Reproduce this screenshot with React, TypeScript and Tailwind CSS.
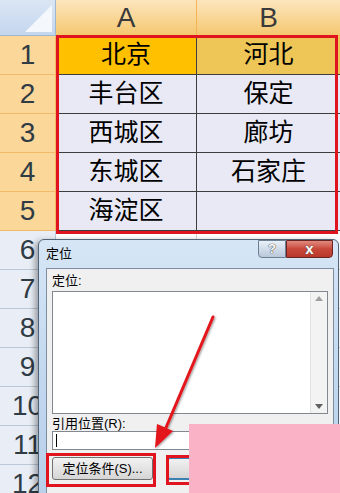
import React from "react";

const font = { fontFamily: '"Liberation Sans", "Noto Sans CJK SC", sans-serif' };

const rows: [string, string, string][] = [
  ["1", "北京", "河北"],
  ["2", "丰台区", "保定"],
  ["3", "西城区", "廊坊"],
  ["4", "东城区", "石家庄"],
  ["5", "海淀区", ""],
  ["6", "", ""],
  ["7", "", ""],
  ["8", "", ""],
  ["9", "", ""],
  ["10", "", ""],
  ["11", "", ""],
  ["12", "", ""],
];

export default function App() {
  return (
    <div className="relative w-[340px] h-[493px] overflow-hidden bg-white" style={font}>
      {/* header row */}
      <div className="flex h-[36px]">
        <div className="w-[56px] h-full bg-gradient-to-b from-[#dbe6f4] to-[#c4d6ee] border-r border-b border-[#9eb6ce] relative shrink-0">
          <svg className="absolute left-0 top-0" width="56" height="36">
            <polygon points="52,5 52,32 25,32" fill="#f4f8fd" />
          </svg>
        </div>
        <div className="w-[141px] h-full shrink-0 bg-gradient-to-b from-[#fce5bd] to-[#f5c86e] border-r border-b border-[#f2b456] flex items-center justify-center text-[28px] text-[#3a3a3a]">A</div>
        <div className="w-[143px] h-full shrink-0 bg-gradient-to-b from-[#fce5bd] to-[#f5c86e] border-b border-[#f2b456] flex items-center justify-center text-[28px] text-[#3a3a3a]">B</div>
      </div>
      {rows.map(([n, a, b], i) => {
        const sel = i < 5;
        return (
          <div key={n} className="flex h-[39px]">
            <div
              className={
                "w-[56px] shrink-0 h-full border-r border-b flex items-center justify-center text-[28px] text-[#2f3b45] " +
                (sel ? "bg-[#fbd79a] border-[#f1b968]" : "bg-[#e9eef6] border-[#b9c7d6]")
              }
            >
              {n}
            </div>
            <div
              className={
                "w-[141px] shrink-0 h-full border-r border-b border-[#3d3d3d] flex items-center justify-center text-[25px] text-black " +
                (i === 0 ? "bg-[#ffc000]" : sel ? "bg-[#e8e9f5]" : "bg-white border-[#d4d4d4]")
              }
            >
              {a}
            </div>
            <div
              className={
                "w-[143px] shrink-0 h-full border-b border-[#3d3d3d] flex items-center justify-center text-[25px] text-black " +
                (i === 0 ? "bg-[#eec557]" : sel ? "bg-[#e8e9f5]" : "bg-white border-[#d4d4d4]")
              }
            >
              {b}
            </div>
          </div>
        );
      })}

      {/* red selection frame */}
      <div className="absolute left-[56px] top-[35px] w-[282px] h-[199px] border-[3px] border-[#e0141e]" />

      {/* dialog */}
      <div className="absolute left-[38px] top-[239px] w-[301px] h-[270px] rounded-t-[6px] border border-[#4f6479] bg-gradient-to-b from-[#d6e6f6] via-[#c3d8ef] to-[#b7cfea] shadow-[-3px_2px_6px_rgba(0,0,0,0.35)]">
        <div className="h-[27px] flex items-center pl-[7px] text-[13px] text-black">定位</div>
        <div className="absolute right-[52px] top-0 w-[28px] h-[18px] rounded-bl-[4px] border border-[#6d7f94] bg-gradient-to-b from-[#e9f0f8] to-[#b9c8da] flex items-center justify-center text-[13px] font-bold text-white" style={{ textShadow: "0 0 1px #333, 0 0 1px #333" }}>?</div>
        <div className="absolute right-[5px] top-0 w-[47px] h-[18px] rounded-br-[4px] border border-[#6b2424] bg-gradient-to-b from-[#e08a7f] via-[#c8473a] to-[#b8392c] flex items-center justify-center text-[15px] font-bold text-white" style={{ textShadow: "0 0 1px #555, 0 0 1px #555" }}>x</div>
        <div className="absolute left-[7px] top-[28px] right-[4px] bottom-0 border border-[#7d8ea0] bg-[#f0f0f0] px-[5px] pt-[4px] flex flex-col">
          <div className="text-[13px] leading-[15px] text-black">定位:</div>
          <div className="mt-[3px] h-[123px] w-[276px] shrink-0 border border-[#828790] bg-white flex justify-end">
            <div className="w-[17px] h-full bg-[#f3f3f3] border-l border-[#e4e4e4] flex flex-col items-center justify-between py-[4px]">
              <svg width="8" height="5"><polygon points="0,5 4,0 8,5" fill="#a0a0a0" /></svg>
              <svg width="8" height="5"><polygon points="0,0 8,0 4,5" fill="#606060" /></svg>
            </div>
          </div>
          <div className="mt-[2px] text-[13px] leading-[15px] text-black">引用位置(R):</div>
          <div className="h-[19px] w-[276px] shrink-0 border border-[#828790] bg-white flex items-center pl-[3px]">
            <div className="w-px h-[13px] bg-black" />
          </div>
          <div className="mt-[7px] flex gap-[14px]">
            <div className="w-[101px] h-[23px] shrink-0 rounded-[3px] border border-[#707070] bg-gradient-to-b from-[#f2f2f2] to-[#d5d5d5] flex items-center justify-center text-[13px] leading-[15px] text-black">定位条件(S)...</div>
            <div className="w-[90px] h-[23px] shrink-0 rounded-[3px] border-2 border-[#3c7fb1] bg-gradient-to-b from-[#f2f2f2] to-[#d5d5d5]" />
          </div>
        </div>
      </div>

      {/* red boxes around buttons */}
      <div className="absolute left-[46px] top-[453px] w-[110px] h-[34px] border-[3px] border-[#e0141e]" />
      <div className="absolute left-[166px] top-[455px] w-[40px] h-[30px] border-[3px] border-[#e0141e]" />

      {/* pink patch */}
      <div className="absolute left-[189px] top-[424px] w-[151px] h-[69px] bg-[#fab3c6]" />

      {/* arrow */}
      <svg className="absolute left-0 top-0 pointer-events-none" width="340" height="493">
        <defs>
          <filter id="sh" x="-20%" y="-20%" width="140%" height="140%">
            <feDropShadow dx="1" dy="1" stdDeviation="1" floodColor="#000" floodOpacity="0.4" />
          </filter>
        </defs>
        <g filter="url(#sh)">
          <line x1="213" y1="317" x2="165" y2="430" stroke="#e3141b" strokeWidth="3" strokeLinecap="round" />
          <polygon points="155,448 157,424 173,431" fill="#e3141b" />
        </g>
      </svg>
    </div>
  );
}
